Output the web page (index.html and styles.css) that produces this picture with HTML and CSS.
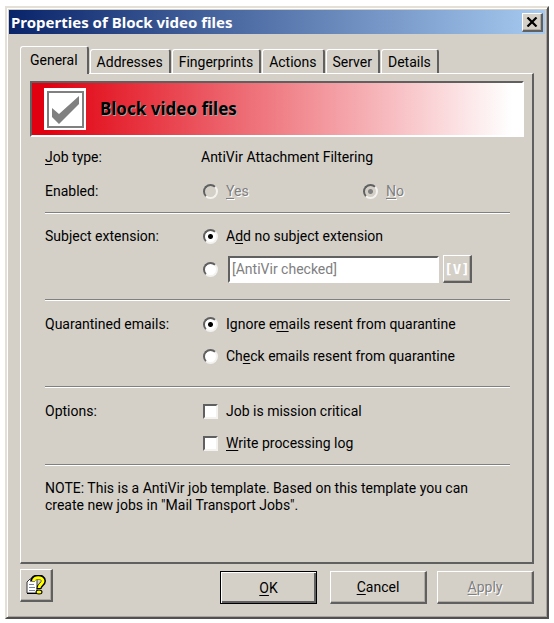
FILE: index.html
```html
<!DOCTYPE html>
<html lang="en">
<head>
    <meta charset="utf-8">
    <title>Properties of Block video files</title>
    <link rel="stylesheet" href="styles.css">
</head>
<body>
    <div class="window">
        <div class="titlebar">
            <h1>Properties of Block video files</h1>
            <button type="button" class="close" aria-label="Close">
                <svg width="12" height="10" viewBox="0 0 12 10"><path d="M1.5 0.5 L10.5 9.5 M10.5 0.5 L1.5 9.5" stroke="#000" stroke-width="2.2"/></svg>
            </button>
        </div>

        <form class="content">
            <div class="tabs" role="tablist">
                <button type="button" class="tab active" role="tab" aria-selected="true">General</button>
                <button type="button" class="tab" role="tab">Addresses</button>
                <button type="button" class="tab" role="tab">Fingerprints</button>
                <button type="button" class="tab" role="tab">Actions</button>
                <button type="button" class="tab" role="tab">Server</button>
                <button type="button" class="tab" role="tab">Details</button>
            </div>

            <div class="panel" role="tabpanel">
                <div class="banner">
                    <svg width="42" height="42" viewBox="0 0 42 42">
                        <rect width="42" height="42" fill="#fff"/>
                        <rect x="4" y="4" width="35" height="35" fill="none" stroke="#808080" stroke-width="2"/>
                        <path d="M8 20 L15 26 L35 8 V16 L15 36 L8 29 Z" fill="#808080"/>
                    </svg>
                    <h2>Block video files</h2>
                </div>

                <div class="group first">
                    <div class="row">
                        <span><u>J</u>ob type:</span>
                        <span>AntiVir Attachment Filtering</span>
                    </div>
                    <div class="row" role="radiogroup" aria-labelledby="enabled">
                        <span id="enabled">Enabled:</span>
                        <div class="pair">
                            <div class="choice">
                                <input type="radio" name="enabled" id="yes" disabled>
                                <label for="yes"><u>Y</u>es</label>
                            </div>
                            <div class="choice">
                                <input type="radio" name="enabled" id="no" checked disabled>
                                <label for="no"><u>N</u>o</label>
                            </div>
                        </div>
                    </div>
                </div>

                <div class="group subject" role="radiogroup" aria-labelledby="subject">
                    <div class="row">
                        <span id="subject">Subject extension:</span>
                        <div class="choice">
                            <input type="radio" name="subject" id="add_none" checked>
                            <label for="add_none">A<u>d</u>d no subject extension</label>
                        </div>
                    </div>
                    <div class="row">
                        <div class="choice custom">
                            <input type="radio" name="subject" id="add_text" aria-label="Custom subject extension">
                            <input type="text" class="textbox" aria-label="Subject extension text" value="[AntiVir checked]" disabled>
                            <button type="button" class="variable" disabled>[V]</button>
                        </div>
                    </div>
                </div>

                <div class="group quarantine" role="radiogroup" aria-labelledby="quarantine">
                    <div class="row">
                        <span id="quarantine">Quarantined emails:</span>
                        <div class="choice">
                            <input type="radio" name="quarantine" id="ignore" checked>
                            <label for="ignore">Ignore e<u>m</u>ails resent from quarantine</label>
                        </div>
                    </div>
                    <div class="row">
                        <div class="choice">
                            <input type="radio" name="quarantine" id="check">
                            <label for="check">Ch<u>e</u>ck emails resent from quarantine</label>
                        </div>
                    </div>
                </div>

                <div class="group" role="group" aria-labelledby="options">
                    <div class="row">
                        <span id="options">Options:</span>
                        <div class="choice">
                            <input type="checkbox" id="critical">
                            <label for="critical">Job is mission critical</label>
                        </div>
                    </div>
                    <div class="row">
                        <div class="choice">
                            <input type="checkbox" id="log">
                            <label for="log"><u>W</u>rite processing log</label>
                        </div>
                    </div>
                </div>

                <p class="note">NOTE: This is a AntiVir job template. Based on this template you can create new jobs in "Mail Transport Jobs".</p>
            </div>

            <div class="footer">
                <button type="button" class="help" aria-label="Help">
                    <svg width="20" height="20" viewBox="0 0 20 20">
                        <path d="M4 4 H11 V18 H1 V7 Z" fill="#fff" stroke="#333" stroke-width="1"/>
                        <path d="M1 18.500 H12" stroke="#000"/>
                        <path d="M3 9.500 H8 M3 12.500 H9 M3 15.500 H9" stroke="#7a86a8"/>
                        <path d="M6.500 6.500 C6.500 0.500 17.500 0.500 17.500 6 C17.500 9.500 13 9.500 13 14" fill="none" stroke="#000" stroke-width="5"/>
                        <ellipse cx="13" cy="17" rx="3.500" ry="2.500" fill="#000"/>
                        <path d="M7.500 6 C7.500 1.500 17 1.500 17 6 C17 9 13 9.500 13 13" fill="none" stroke="#ff0" stroke-width="3"/>
                        <ellipse cx="13" cy="17" rx="2.500" ry="1.500" fill="#ff0"/>
                    </svg>
                </button>
                <div class="buttons">
                    <button type="button" class="btn default"><u>O</u>K</button>
                    <button type="button" class="btn"><u>C</u>ancel</button>
                    <button type="button" class="btn" disabled><u>A</u>pply</button>
                </div>
            </div>
        </form>
    </div>
</body>
</html>
```
FILE: styles.css
```css
* {
    box-sizing: border-box;
}
body {
    margin: 0;
    padding: 6px 5px 4px;
    background: #fff;
    color: #000;
    font: 14px/20px Roboto, Arial, sans-serif;
}
button, input {
    margin: 0;
    font: inherit;
    color: inherit;
}
svg {
    display: block;
}
u {
    text-underline-offset: 2px;
}

/* window */
.window {
    padding: 2px;
    background: #d4d0c8;
    border: 2px solid;
    border-color: #e4e0d8 #505050 #505050 #e4e0d8;
    box-shadow: inset 1px 1px #fff, inset -1px -1px #a8a49c;
}
.titlebar {
    display: flex;
    align-items: center;
    justify-content: space-between;
    height: 24px;
    padding: 0 2px;
    background: linear-gradient(to right, #0a246a, #a6caf0);
}
.titlebar h1 {
    margin: 0;
    color: #fff;
    font: bold 15px/20px "Noto Sans", Tahoma, sans-serif;
}
.close, .help, .btn, .variable {
    display: flex;
    align-items: center;
    justify-content: center;
    padding: 0;
    background: #d4d0c8;
    border: solid;
    border-width: 1px 2px 2px 1px;
    border-color: #fff #606060 #606060 #fff;
    box-shadow: inset -1px -1px #b0aca4;
}
.close {
    width: 21px;
    height: 19px;
}
.content {
    padding: 12px 11px 11px;
}

/* tabs */
.tabs {
    display: flex;
    align-items: flex-end;
    gap: 1px;
}
.tab {
    height: 24px;
    padding: 0 6px;
    background: #d4d0c8;
    border: solid;
    border-width: 1px 2px 0 1px;
    border-color: #fff #606060 #606060 #fff;
    border-radius: 3px 3px 0 0;
}
.tab.active {
    position: relative;
    height: 28px;
    margin-bottom: -1px;
    padding: 0 9px 2px;
}
.panel {
    height: 491px;
    padding: 7px 8px 7px 9px;
    border: solid;
    border-width: 1px 2px 2px 1px;
    border-color: #fff #606060 #606060 #fff;
}

/* banner */
.banner {
    display: flex;
    align-items: center;
    gap: 14px;
    height: 56px;
    padding-left: 12px;
    background: linear-gradient(to right, #e1000f 3%, #fff 98%);
    border: 2px solid;
    border-color: #606060 #fff #fff #606060;
}
.banner h2 {
    margin: 0;
    font: bold 17px/20px "Noto Sans", Tahoma, sans-serif;
    text-shadow: 1px 1px #b0a0a0;
}

/* settings */
.group {
    display: flex;
    flex-direction: column;
    gap: 12px;
    margin: 0 14px 1px 15px;
    padding: 13px 0 11px;
    border-bottom: 1px solid #808080;
    box-shadow: 0 1px #fff;
}
.group.first {
    gap: 14px;
    padding-top: 10px;
}
.group.subject {
    gap: 9px;
    padding: 12px 0 16px;
}
.group.quarantine {
    padding-bottom: 20px;
}
.row {
    display: grid;
    grid-template-columns: 156px 1fr;
    align-items: center;
}
.choice {
    grid-column: 2;
    display: flex;
    align-items: center;
    gap: 8px;
    padding-left: 2px;
}
.pair {
    display: grid;
    grid-template-columns: 160px 1fr;
}
.pair .choice {
    grid-column: auto;
}
input[type="radio"], input[type="checkbox"] {
    appearance: none;
    width: 15px;
    height: 15px;
    background: #fff;
    border: 2px solid;
    border-color: #606060 #f4f2ee #f4f2ee #606060;
}
input[type="radio"] {
    border-radius: 50%;
}
input[type="radio"]:checked {
    background: radial-gradient(circle, #000 2px, #fff 3px);
}
input[type="radio"]:disabled {
    background: #d4d0c8;
}
input[type="radio"]:checked:disabled {
    background: radial-gradient(circle, #808080 2px, #d4d0c8 3px);
}
input:disabled + label, .btn:disabled {
    color: #808080;
    text-shadow: 1px 1px #fff;
}
.custom {
    gap: 4px;
}
.textbox {
    width: 211px;
    height: 27px;
    margin-left: 6px;
    padding: 0 2px;
    background: #fff;
    color: #808080;
    border: 2px solid;
    border-color: #606060 #fff #fff #606060;
}
.variable {
    width: 29px;
    height: 28px;
    color: #fff;
    font: bold 14px/20px "DejaVu Sans Mono", monospace;
}
.note {
    margin: 0 32px 0 15px;
    padding-top: 14px;
    line-height: 17px;
}

/* buttons */
.footer {
    display: flex;
    justify-content: space-between;
    padding-top: 5px;
}
.help {
    width: 33px;
    height: 33px;
}
.buttons {
    display: flex;
    gap: 10px;
    padding-top: 2px;
}
.btn {
    width: 97px;
    height: 33px;
}
.btn.default {
    margin-right: 3px;
    border: 1px solid #000;
    box-shadow: inset 1px 1px #fff, inset -2px -2px #606060;
}
```
